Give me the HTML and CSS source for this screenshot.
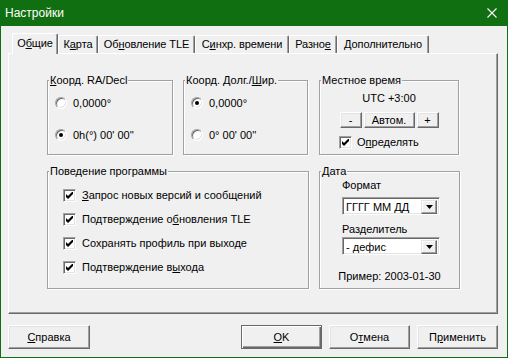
FILE: index.html
```html
<!DOCTYPE html>
<html lang="ru">
<head>
<meta charset="utf-8">
<title>Настройки</title>
<link rel="stylesheet" href="styles.css">
</head>
<body>
<div class="window">
  <div class="titlebar">
    <span class="title">Настройки</span>
    <svg class="close" width="10" height="10" viewBox="0 0 10 10"><path d="M0.5 0.5 L9.5 9.5 M9.5 0.5 L0.5 9.5" stroke="#fff" stroke-width="1.1" fill="none"/></svg>
  </div>
  <div class="body">
    <div class="tabs">
      <div class="tab active t1">О<u>б</u>щие</div>
      <div class="tab t2">К<u>а</u>рта</div>
      <div class="tab t3">Об<u>н</u>овление TLE</div>
      <div class="tab t4">С<u>и</u>нхр. времени</div>
      <div class="tab t5">Разно<u>е</u></div>
      <div class="tab t6"><u>Д</u>ополнительно</div>
    </div>
    <div class="panel">
      <div class="row row1">
        <div class="group g1">
          <span class="legend"><u>К</u>оорд. RA/Decl</span>
          <div class="opt"><span class="radio"></span><span>0,0000°</span></div>
          <div class="opt opt2"><span class="radio checked"></span><span>0h(°) 00' 00''</span></div>
        </div>
        <div class="group g2">
          <span class="legend">Коорд. Долг./<u>Ш</u>ир.</span>
          <div class="opt"><span class="radio checked"></span><span>0,0000°</span></div>
          <div class="opt opt2"><span class="radio"></span><span>0° 00' 00''</span></div>
        </div>
        <div class="group g3">
          <span class="legend">Местное время</span>
          <div class="utc">UTC +3:00</div>
          <div class="tzbtns">
            <div class="btn small w-minus">-</div>
            <div class="btn small w-auto">Автом.</div>
            <div class="btn small w-plus">+</div>
          </div>
          <div class="chk-row detect"><span class="checkbox"><svg width="7" height="7" viewBox="0 0 7 7"><path d="M0 2 L2 4 L6 0 L7 0 L7 2 L2 7 L0 5 Z" fill="#000"/></svg></span><span>О<u>п</u>ределять</span></div>
        </div>
      </div>
      <div class="row row2">
        <div class="group g4">
          <span class="legend">Поведение программы</span>
          <div class="chk-row beh"><span class="checkbox"><svg width="7" height="7" viewBox="0 0 7 7"><path d="M0 2 L2 4 L6 0 L7 0 L7 2 L2 7 L0 5 Z" fill="#000"/></svg></span><span><u>З</u>апрос новых версий и сообщений</span></div>
          <div class="chk-row beh"><span class="checkbox"><svg width="7" height="7" viewBox="0 0 7 7"><path d="M0 2 L2 4 L6 0 L7 0 L7 2 L2 7 L0 5 Z" fill="#000"/></svg></span><span>Подтверждение о<u>б</u>новления TLE</span></div>
          <div class="chk-row beh"><span class="checkbox"><svg width="7" height="7" viewBox="0 0 7 7"><path d="M0 2 L2 4 L6 0 L7 0 L7 2 L2 7 L0 5 Z" fill="#000"/></svg></span><span>Сохранять профиль при выходе</span></div>
          <div class="chk-row beh"><span class="checkbox"><svg width="7" height="7" viewBox="0 0 7 7"><path d="M0 2 L2 4 L6 0 L7 0 L7 2 L2 7 L0 5 Z" fill="#000"/></svg></span><span>Подтверждение в<u>ы</u>хода</span></div>
        </div>
        <div class="group g5">
          <span class="legend">Дата</span>
          <div class="lbl lbl1">Формат</div>
          <div class="select"><span class="val">ГГГГ ММ ДД</span><span class="arrow"><svg width="7" height="4" viewBox="0 0 7 4"><path d="M0 0 H7 L3.5 4 Z" fill="#000"/></svg></span></div>
          <div class="lbl lbl2">Разделитель</div>
          <div class="select sel2"><span class="val">- дефис</span><span class="arrow"><svg width="7" height="4" viewBox="0 0 7 4"><path d="M0 0 H7 L3.5 4 Z" fill="#000"/></svg></span></div>
          <div class="example">Пример: 2003-01-30</div>
        </div>
      </div>
    </div>
    <div class="buttons">
      <div class="btn big help"><u>С</u>правка</div>
      <div class="right-btns">
        <div class="btn big default"><u>О</u>K</div>
        <div class="btn big">О<u>т</u>мена</div>
        <div class="btn big">П<u>р</u>именить</div>
      </div>
    </div>
  </div>
</div>
</body>
</html>
```

FILE: styles.css
```css
html, body {
  margin: 0;
  padding: 0;
  background: #f0f0f0;
}
body {
  font-family: "Liberation Sans", Arial, sans-serif;
  font-size: 11px;
  color: #000;
}
u { text-decoration: underline; text-underline-offset: 1px; }

.window {
  width: 508px;
  height: 358px;
  box-sizing: border-box;
  border: 1px solid #106f10;
  border-top: none;
  background: #f0f0f0;
  display: flex;
  flex-direction: column;
}

.titlebar {
  height: 26px;
  margin: 0 -1px;
  flex: none;
  background: #106f10;
  color: #fff;
  display: flex;
  align-items: center;
  justify-content: space-between;
  padding: 0 11px 0 5px;
  font-size: 12px;
}
.close { display: block; }

.body {
  flex: 1;
  padding: 7px 9px 0 7px;
  display: flex;
  flex-direction: column;
}

.tabs {
  display: flex;
  align-items: flex-end;
  height: 20px;
  padding-left: 4px;
  position: relative;
  z-index: 1;
}
.tab {
  height: 18px;
  box-sizing: border-box;
  padding: 0;
  border-top: 1px solid #fff;
  border-left: 1px solid #fff;
  border-right: 1px solid #696969;
  border-radius: 2px 2px 0 0;
  box-shadow: inset -1px 0 #a0a0a0;
  line-height: 17px;
  white-space: nowrap;
  text-align: center;
  background: #f0f0f0;
  letter-spacing: -0.1px;
}
.tab.active {
  height: 21px;
  margin-bottom: -1px;
  line-height: 18px;
}
.t1 { width: 46px; }
.t2 { width: 40px; }
.t3 { width: 97px; }
.t4 { width: 94px; }
.t5 { width: 48px; }
.t6 { width: 92px; }

.panel {
  height: 261px;
  box-sizing: border-box;
  border: 1px solid;
  border-color: #fff #696969 #696969 #fff;
  box-shadow: inset -1px -1px #a0a0a0;
  padding: 26px 0 0 38px;
}

.row { display: flex; }
.row2 { margin-top: 16px; }

.group {
  position: relative;
  box-sizing: border-box;
  border: 1px solid #a0a0a0;
  box-shadow: inset 1px 1px #fff, 1px 1px #fff;
}
.legend {
  position: absolute;
  top: -7px;
  left: 1px;
  padding: 0 1px;
  background: #f0f0f0;
  line-height: 13px;
  white-space: nowrap;
}

.g1 { width: 126px; height: 75px; margin-right: 10px; padding: 15px 0 0 7px; }
.g2 { width: 125px; height: 75px; margin-right: 11px; padding: 15px 0 0 7px; }
.g3 { width: 140px; height: 75px; padding-top: 11px; }
.g4 { width: 262px; height: 118px; margin-right: 10px; padding: 17px 0 0 15px; }
.g5 { width: 141px; height: 118px; padding-top: 7px; }

.opt {
  display: flex;
  align-items: center;
  height: 14px;
  gap: 6px;
}
.opt2 { margin-top: 18px; }

.radio {
  width: 12px;
  height: 12px;
  box-sizing: border-box;
  border-radius: 50%;
  background: #fff;
  border: 1px solid;
  border-color: #a0a0a0 #fff #fff #a0a0a0;
  box-shadow: inset 1px 1px #696969, inset -1px -1px #e3e3e3;
  display: flex;
  align-items: center;
  justify-content: center;
  flex: none;
}
.radio.checked::after {
  content: "";
  width: 4px;
  height: 4px;
  border-radius: 50%;
  background: #000;
}

.checkbox {
  width: 13px;
  height: 13px;
  box-sizing: border-box;
  background: #fff;
  border: 1px solid;
  border-color: #a0a0a0 #fff #fff #a0a0a0;
  box-shadow: inset 1px 1px #696969, inset -1px -1px #e3e3e3;
  display: flex;
  align-items: center;
  justify-content: center;
  flex: none;
}
.checkbox svg { display: block; }

.chk-row {
  display: flex;
  align-items: center;
  height: 13px;
  line-height: 13px;
}
.beh { gap: 6px; }
.beh + .beh { margin-top: 11px; }
.detect { gap: 5px; margin-top: 8px; padding-left: 19px; }

.utc {
  text-align: center;
  line-height: 13px;
}
.tzbtns {
  display: flex;
  justify-content: center;
  gap: 2px;
  margin-top: 7px;
}

.btn {
  box-sizing: border-box;
  border: 1px solid;
  border-color: #fff #696969 #696969 #fff;
  box-shadow: inset -1px -1px #a0a0a0, inset 1px 1px #e3e3e3;
  background: #f0f0f0;
  text-align: center;
  white-space: nowrap;
}
.small { height: 16px; line-height: 14px; }
.w-minus { width: 22px; }
.w-auto { width: 51px; }
.w-plus { width: 22px; }

.lbl { padding-left: 22px; line-height: 13px; }
.lbl1 { margin-top: 0; }
.lbl2 { margin-top: 8px; }

.select {
  margin-left: 22px;
  margin-top: 5px;
  width: 98px;
  height: 18px;
  box-sizing: border-box;
  background: #fff;
  border: 1px solid;
  border-color: #a0a0a0 #fff #fff #a0a0a0;
  box-shadow: inset 1px 1px #696969, inset -1px -1px #e3e3e3;
  display: flex;
  padding: 2px;
}
.sel2 { margin-top: 1px; }
.select .val {
  flex: 1;
  line-height: 14px;
  padding-left: 1px;
  white-space: nowrap;
}
.select .arrow {
  width: 16px;
  height: 14px;
  box-sizing: border-box;
  border: 1px solid;
  border-color: #e3e3e3 #696969 #696969 #e3e3e3;
  box-shadow: inset -1px -1px #a0a0a0, inset 1px 1px #fff;
  background: #f0f0f0;
  display: flex;
  align-items: center;
  justify-content: center;
}
.select .arrow svg { display: block; }

.example {
  margin-top: 15px;
  text-align: center;
  line-height: 13px;
}

.buttons {
  display: flex;
  justify-content: space-between;
  margin-top: 11px;
}
.right-btns { display: flex; gap: 7px; }
.big { width: 81px; height: 24px; line-height: 22px; }
.help { width: 82px; }
.default {
  border-color: #696969;
  box-shadow: inset 1px 1px #fff, inset -1px -1px #696969, inset -2px -2px #a0a0a0;
}
```
